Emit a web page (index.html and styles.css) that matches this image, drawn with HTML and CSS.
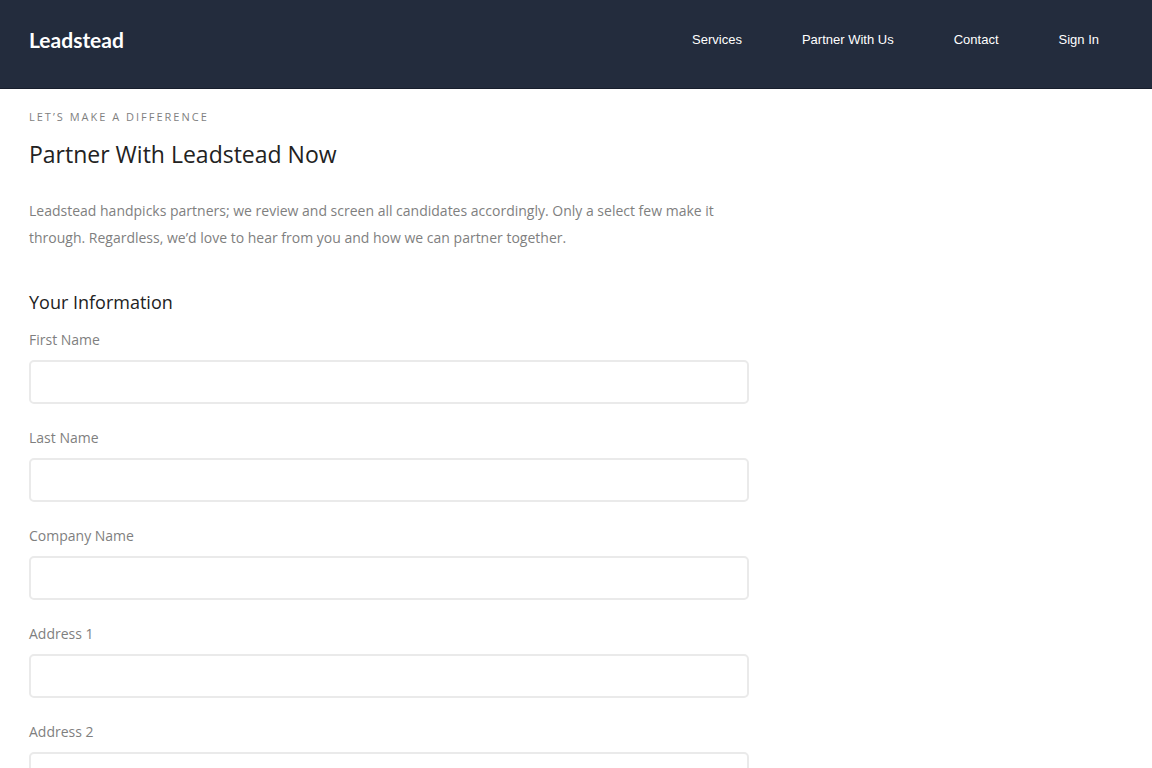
FILE: index.html
```html
<!DOCTYPE html>
<html lang="en">
    <head>
        <meta charset="utf-8">
        <title>Partner With Us | Leadstead</title>
        <meta name="viewport" content="width=device-width, initial-scale=1.0">
        <link rel="stylesheet" href="styles.css">
    </head>

    <body>
        <header class="site-header">
            <a class="logo" href="#">Leadstead</a>
            <nav class="main-nav">
                <a href="#">Services</a>
                <a href="#">Partner With Us</a>
                <a href="#">Contact</a>
                <a href="#">Sign In</a>
            </nav>
        </header>

        <main class="content">
            <p class="eyebrow">Let’s make a difference</p>
            <h1>Partner With Leadstead Now</h1>
            <p class="intro">Leadstead handpicks partners; we review and screen all candidates accordingly. Only a select few make it through. Regardless, we’d love to hear from you and how we can partner together.</p>

            <form class="partner-form" action="#" method="post">
                <h2>Your Information</h2>
                <div class="field">
                    <label for="first-name">First Name</label>
                    <input type="text" id="first-name" name="first-name">
                </div>
                <div class="field">
                    <label for="last-name">Last Name</label>
                    <input type="text" id="last-name" name="last-name">
                </div>
                <div class="field">
                    <label for="company">Company Name</label>
                    <input type="text" id="company" name="company">
                </div>
                <div class="field">
                    <label for="address1">Address 1</label>
                    <input type="text" id="address1" name="address1">
                </div>
                <div class="field">
                    <label for="address2">Address 2</label>
                    <input type="text" id="address2" name="address2">
                </div>
            </form>
        </main>
    </body>
</html>
```
FILE: styles.css
```css
* {
    box-sizing: border-box;
}
body {
    margin: 0;
    background: #fff;
    color: #7f7f7f;
    font: 14px/27px "Open Sans", "Noto Sans", sans-serif;
}
h1, h2, p {
    margin: 0;
    font-weight: normal;
}

/* header */
.site-header {
    display: flex;
    justify-content: space-between;
    align-items: center;
    padding: 24px 53px 32px 29px;
    background: #232c3d;
    border-bottom: 1px solid #171e2c;
}
.logo {
    color: #fff;
    font: bold 21px/32px Lato, sans-serif;
    text-decoration: none;
}
.main-nav {
    display: flex;
    gap: 60px;
}
.main-nav a {
    color: #fff;
    font: 13px/32px "Liberation Sans", Arial, sans-serif;
    text-decoration: none;
}

/* page */
.content {
    max-width: 778px;
    padding: 16px 29px;
}
.eyebrow {
    font-size: 11px;
    line-height: 24px;
    letter-spacing: 2px;
    text-transform: uppercase;
}
h1 {
    margin: 7px 0 25px;
    color: #222;
    font-size: 23px;
    line-height: 36px;
}
h2 {
    margin: 38px 0 10px;
    color: #222;
    font-size: 18px;
    line-height: 27px;
}

/* form */
.field {
    display: flex;
    flex-direction: column;
    gap: 7px;
    margin-bottom: 20px;
}
.field input {
    width: 100%;
    height: 44px;
    padding: 8px 12px;
    border: 2px solid #eaeaea;
    border-radius: 5px;
    background: #fff;
    color: #555;
    font: inherit;
}
.field input:focus {
    border-color: #aaa;
    outline: 0;
}
```
